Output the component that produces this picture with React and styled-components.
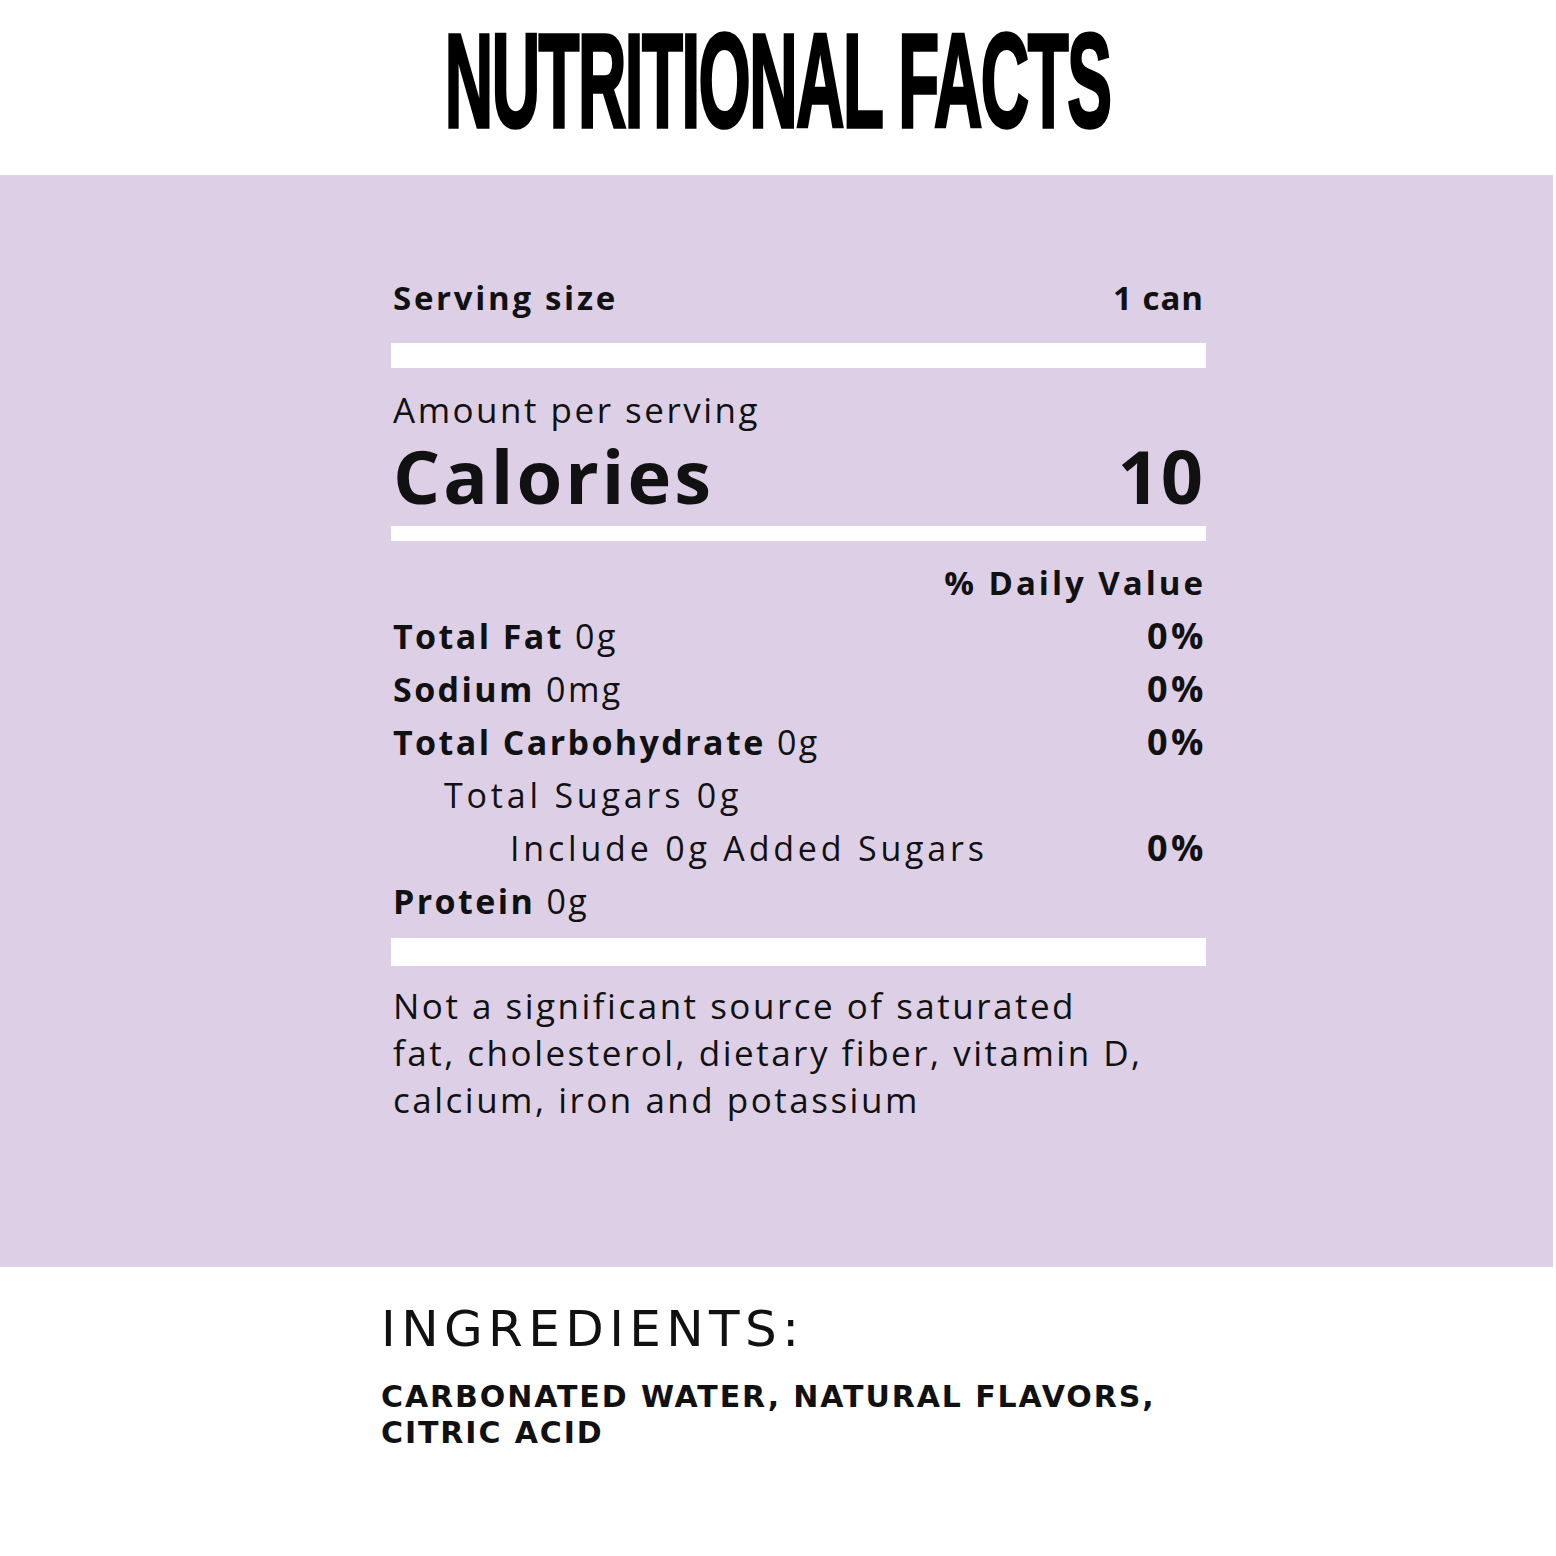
import React from 'react'
import styled, { createGlobalStyle } from 'styled-components'

const Global = createGlobalStyle`
  html, body { margin: 0; padding: 0; background: #fff; }
  body { font-family: "Open Sans", Lato, sans-serif; color: #111; }
`

const rows = [
  { name: 'Total Fat', amount: '0g', dv: '0%', level: 0, bold: true },
  { name: 'Sodium', amount: '0mg', dv: '0%', level: 0, bold: true },
  { name: 'Total Carbohydrate', amount: '0g', dv: '0%', level: 0, bold: true },
  { name: 'Total Sugars', amount: '0g', dv: '', level: 1 },
  { name: 'Include 0g Added Sugars', amount: '', dv: '0%', level: 2 },
  { name: 'Protein', amount: '0g', dv: '', level: 0, bold: true },
]

const App = () => {
  return (
    <>
      <Global />
      <Page>
        <Header>
          <Title>NUTRITIONAL FACTS</Title>
        </Header>
        <Panel>
          <Label>
            <Row>
              <Strong>Serving size</Strong>
              <Strong>1 can</Strong>
            </Row>
            <Bar $h={25} $top={22} $bottom={22} />
            <Light>Amount per serving</Light>
            <CaloriesRow>
              <span>Calories</span>
              <span>10</span>
            </CaloriesRow>
            <Bar $h={15} $top={4} $bottom={22} />
            <DvHead>% Daily Value</DvHead>
            {rows.map((r) => (
              <NutrientRow key={r.name}>
                <NutrientName $level={r.level}>
                  {r.bold ? <b>{r.name}</b> : r.name}
                  {r.amount && <> {r.amount}</>}
                </NutrientName>
                <Dv>{r.dv}</Dv>
              </NutrientRow>
            ))}
            <Bar $h={28} $top={10} $bottom={16} />
            <Note>
              Not a significant source of saturated<br />
              fat, cholesterol, dietary fiber, vitamin D,<br />
              calcium, iron and potassium
            </Note>
          </Label>
        </Panel>
        <Ingredients>
          <IngTitle>INGREDIENTS:</IngTitle>
          <IngList>
            CARBONATED WATER, NATURAL FLAVORS,<br />
            CITRIC ACID
          </IngList>
        </Ingredients>
      </Page>
    </>
  )
}

export default App

const Page = styled.div`
  width: 1556px;
  min-height: 1556px;
  background: #fff;
`

const Header = styled.div`
  height: 175px;
  display: flex;
  justify-content: center;
  align-items: flex-start;
  overflow: hidden;
`

const Title = styled.h1`
  margin: 14px 0 0 0;
  font-family: "Liberation Sans", Arial, sans-serif;
  font-weight: 700;
  font-size: 134px;
  line-height: 134px;
  color: #000;
  letter-spacing: -3px;
  transform: scaleX(0.5);
  transform-origin: center top;
  white-space: nowrap;
  -webkit-text-stroke: 3.5px #000;
`

const Panel = styled.section`
  width: 1553px;
  height: 1092px;
  background: #ddd0e6;
  padding-left: 391px;
  box-sizing: border-box;
`

const Label = styled.div`
  width: 815px;
  padding-top: 100px;
  display: flex;
  flex-direction: column;
`

const Row = styled.div`
  display: flex;
  justify-content: space-between;
  align-items: baseline;
  padding: 0 2px;
`

const Strong = styled.span`
  font-weight: 700;
  font-size: 33px;
  line-height: 46px;
  letter-spacing: 2.7px;
  &:last-child { letter-spacing: 1px; }
`

const Bar = styled.div`
  height: ${(p) => p.$h}px;
  margin: ${(p) => p.$top}px 0 ${(p) => p.$bottom}px;
  background: #fff;
`

const Light = styled.div`
  font-size: 35px;
  line-height: 40px;
  padding: 0 2px;
  letter-spacing: 2.5px;
`

const CaloriesRow = styled(Row)`
  font-weight: 700;
  font-size: 74px;
  line-height: 92px;
  letter-spacing: 3px;
  span:last-child { letter-spacing: 1px; }
`

const DvHead = styled.div`
  align-self: flex-end;
  font-weight: 700;
  font-size: 33px;
  line-height: 40px;
  padding-right: 2px;
  margin-bottom: 7px;
  letter-spacing: 3px;
  margin-right: -2px;
`

const NutrientRow = styled(Row)`
  height: 53px;
  font-size: 34px;
  line-height: 53px;
  letter-spacing: 2.4px;
`

const NutrientName = styled.span`
  padding-left: ${(p) => [0, 51, 117][p.$level]}px;
  letter-spacing: ${(p) => (p.$level ? 3.8 : 2.4)}px;
  b { font-weight: 700; letter-spacing: 2.4px; }
`

const Dv = styled.span`
  font-weight: 700;
  font-size: 36px;
  line-height: 1;
  letter-spacing: 3.5px;
  margin-right: -3px;
`

const Note = styled.p`
  margin: 0;
  padding: 0 2px;
  font-size: 35px;
  line-height: 47px;
  letter-spacing: 2.5px;
`

const Ingredients = styled.section`
  padding: 32px 0 0 381px;
`

const IngTitle = styled.h2`
  margin: 0 0 20px;
  font-family: "DejaVu Sans", sans-serif;
  font-weight: 400;
  font-size: 50px;
  line-height: 60px;
  letter-spacing: 5.4px;
  color: #111;
`

const IngList = styled.p`
  margin: 0;
  font-family: "DejaVu Sans", sans-serif;
  font-weight: 700;
  font-size: 30px;
  line-height: 36px;
  letter-spacing: 1.9px;
  color: #111;
`
